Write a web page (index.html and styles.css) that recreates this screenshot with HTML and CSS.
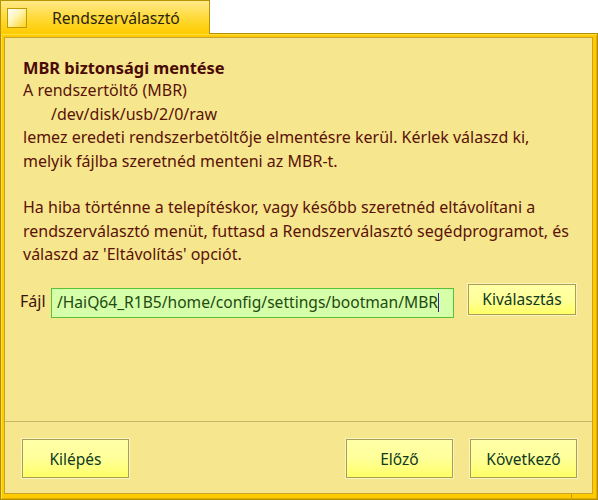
FILE: index.html
```html
<!DOCTYPE html>
<html lang="hu">
<head>
<meta charset="utf-8">
<title>Rendszerválasztó</title>
<link rel="stylesheet" href="styles.css">
</head>
<body>
<div class="tab">
  <span class="close"></span>
  <span class="tab-title">Rendszerválasztó</span>
</div>
<div class="frame">
  <div class="content">
    <div class="main">
      <div class="heading">MBR biztonsági mentése</div>
      <div class="line">A rendszertöltő (MBR)</div>
      <div class="line indent">/dev/disk/usb/2/0/raw</div>
      <div class="line">lemez eredeti rendszerbetöltője elmentésre kerül. Kérlek válaszd ki,</div>
      <div class="line">melyik fájlba szeretnéd menteni az MBR-t.</div>
      <div class="line">&nbsp;</div>
      <div class="line">Ha hiba történne a telepítéskor, vagy később szeretnéd eltávolítani a</div>
      <div class="line">rendszerválasztó menüt, futtasd a Rendszerválasztó segédprogramot, és</div>
      <div class="line">válaszd az 'Eltávolítás' opciót.</div>
      <div class="file-row">
        <span class="label">Fájl</span>
        <div class="field"><span class="field-text">/HaiQ64_R1B5/home/config/settings/bootman/MBR</span><span class="caret"></span></div>
        <button class="btn btn-pick">Kiválasztás</button>
      </div>
    </div>
    <div class="footer">
      <button class="btn">Kilépés</button>
      <div class="spacer"></div>
      <button class="btn">Előző</button>
      <button class="btn">Következő</button>
    </div>
    <div class="grip"></div>
  </div>
</div>
</body>
</html>
```
FILE: styles.css
```css
html, body {
  margin: 0;
  padding: 0;
  background: #ffffff;
  width: 598px;
  height: 500px;
  overflow: hidden;
  font-family: "Noto Sans", "DejaVu Sans", sans-serif;
}

.tab {
  box-sizing: border-box;
  width: 210px;
  height: 34px;
  border: 1px solid #b89400;
  border-bottom: none;
  background: linear-gradient(to bottom, #ffe98a 0%, #ffd932 55%, #ffcb00 100%);
  display: flex;
  align-items: center;
  padding-left: 6px;
  position: relative;
  z-index: 2;
}

.close {
  box-sizing: border-box;
  width: 20px;
  height: 20px;
  border: 1px solid #bf9a00;
  background: linear-gradient(135deg, #ffffff 0%, #fff4b0 45%, #ffd21a 100%);
  margin-top: 1px;
}

.tab-title {
  margin-left: 25px;
  font-size: 15.7px;
  color: #2b2410;
  margin-top: 1px;
}

.frame {
  box-sizing: border-box;
  width: 598px;
  height: 467px;
  margin-top: -1px;
  border: 1px solid #b08c00;
  background: #ffcb00;
  padding: 3px 4px 5px 3px;
  box-shadow: inset 1px 1px 0 #ffe040, inset -1px -1px 0 #e0b000;
}

.content {
  box-sizing: border-box;
  height: 100%;
  border: 1px solid #c9a32a;
  background: #f6e68e;
  display: flex;
  flex-direction: column;
  position: relative;
}

.main {
  padding: 18px 0 0 18px;
  flex: 1;
  color: #5a1208;
  font-size: 16px;
  line-height: 23.4px;
}

.heading {
  font-weight: bold;
  font-size: 16.4px;
  color: #4a0a06;
}

.line {
  white-space: nowrap;
}

.indent {
  padding-left: 28px;
}

.file-row {
  display: flex;
  align-items: flex-start;
  margin-top: 14px;
}

.label {
  flex-shrink: 0;
  margin-top: 9px;
  color: #3a1208;
  width: 31px;
  margin-left: -3px;
}

.field {
  flex-shrink: 0;
  box-sizing: border-box;
  width: 403px;
  height: 30px;
  margin-top: 7px;
  border: 1px solid #58c238;
  background: #d6ffaa;
  display: flex;
  align-items: center;
  padding-left: 5px;
  color: #1f4a12;
  font-size: 15.6px;
  white-space: nowrap;
}

.caret {
  display: inline-block;
  width: 1px;
  height: 19px;
  background: #3a1aa0;
}

.btn {
  flex-shrink: 0;
  box-sizing: border-box;
  width: 107px;
  height: 39px;
  border: 1px solid #a6a050;
  box-shadow: 0 0 0 1px #fbf3c4;
  background: linear-gradient(to bottom, #ffffa8 0%, #ffff9a 50%, #ffff66 100%);
  font-family: "Noto Sans", "DejaVu Sans", sans-serif;
  font-size: 15.5px;
  color: #103a20;
  padding: 0;
  margin: 0;
}

.btn-pick {
  width: 108px;
  height: 31px;
  margin-left: 14px;
  margin-top: 3px;
}

.footer {
  border-top: 1px solid #c9b46a;
  display: flex;
  padding: 17px 15px 15px 17px;
  gap: 17px;
}

.spacer {
  flex: 1;
}

.grip {
  position: absolute;
  right: -5px;
  bottom: -7px;
  width: 25px;
  height: 6px;
  border-left: 1px solid #c79e00;
  pointer-events: none;
}
```
